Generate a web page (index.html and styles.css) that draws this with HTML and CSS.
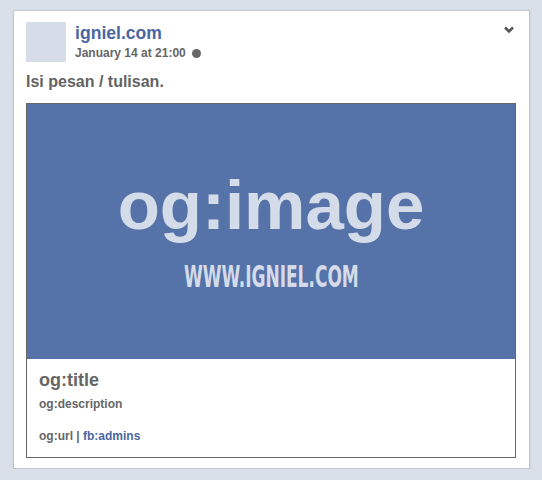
FILE: index.html
```html
<!DOCTYPE html>
<html lang="id">
<head>
    <meta charset="UTF-8">
    <meta name="viewport" content="width=device-width, initial-scale=1.0">
    <title>Facebook Post Preview</title>
    <link rel="stylesheet" href="styles.css">
</head>
<body>
    <div class="post">
        <div class="post-head">
            <div class="avatar"></div>
            <div class="meta">
                <p class="page-name">igniel.com</p>
                <p class="post-time">January 14 at 21:00 <span class="dot"></span></p>
            </div>
            <svg class="chevron" width="10" height="8" viewBox="0 0 10 8">
                <path d="M1 1.5 L5 5.5 L9 1.5" fill="none" stroke="#555" stroke-width="2.6"/>
            </svg>
        </div>

        <p class="message">Isi pesan / tulisan.</p>

        <div class="share-box">
            <div class="share-img">
                <span class="img-title">og:image</span>
                <span class="img-url">WWW.IGNIEL.COM</span>
            </div>
            <div class="share-info">
                <p class="og-title">og:title</p>
                <p class="og-desc">og:description</p>
                <p class="og-url">og:url | <span class="admins">fb:admins</span></p>
            </div>
        </div>
    </div>
</body>
</html>
```

FILE: styles.css
```css
body{
    margin: 0;
    padding: 10px 0 0 13px;
    background-color: #d9e0ea;
    font-family: "Liberation Sans", Arial, sans-serif;
    font-weight: bold;
}
p{
    margin: 0;
}

.post{
    width: 490px;
    padding: 11px 13px 10px 12px;
    background-color: #fff;
    border: 1px solid #c3c8d0;
    box-shadow: 0 1px 2px rgba(0, 0, 0, 0.12);
}

/* kepala post */
.post-head{
    display: flex;
    align-items: flex-start;
}
.avatar{
    width: 40px;
    height: 40px;
    background-color: #d6dde8;
    margin-right: 9px;
}
.page-name{
    font-size: 17.6px;
    line-height: 22px;
    color: #4b67a1;
}
.post-time{
    margin-top: 1px;
    font-size: 12px;
    line-height: 16px;
    color: #666;
    display: flex;
    align-items: center;
}
.dot{
    display: inline-block;
    width: 9px;
    height: 9px;
    margin-left: 6px;
    border-radius: 50%;
    background-color: #666;
}
.chevron{
    margin-left: auto;
    margin-top: 4px;
    margin-right: 2px;
}

.message{
    margin: 10px 0 11px;
    font-size: 16px;
    line-height: 20px;
    color: #636363;
}

/* kotak share */
.share-box{
    border: 1px solid #666;
}
.share-img{
    height: 255px;
    box-sizing: border-box;
    padding-top: 67px;
    background-color: #5673a9;
    color: #d5dce9;
    display: flex;
    flex-direction: column;
    align-items: center;
}
.img-title{
    font-size: 69px;
    line-height: 70px;
}
.img-url{
    margin-top: 19px;
    font-family: "Liberation Sans Narrow", "DejaVu Sans Condensed", sans-serif;
    font-size: 31px;
    line-height: 32px;
    transform: scaleX(0.61);
}
.share-info{
    padding: 10px 12px 13px;
    color: #666;
}
.og-title{
    font-size: 18px;
    line-height: 22px;
}
.og-desc{
    margin-top: 5px;
    font-size: 12px;
    line-height: 16px;
}
.og-url{
    margin-top: 16px;
    font-size: 12px;
    line-height: 16px;
}
.admins{
    color: #4b67a1;
}
```
